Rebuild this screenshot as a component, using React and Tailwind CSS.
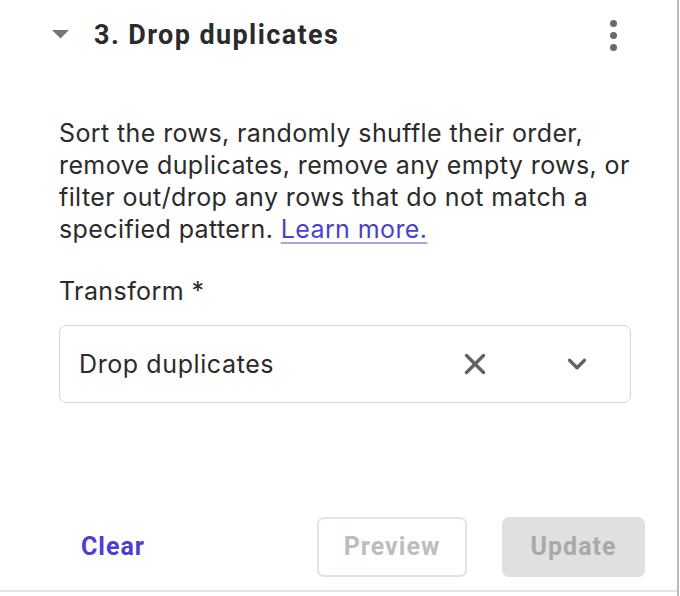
import { X, ChevronDown } from "lucide-react";

export default function App() {
  const bodyFont = { fontFamily: "Inter, 'Open Sans', sans-serif" };
  const headFont = { fontFamily: "Roboto, 'Liberation Sans', sans-serif" };

  return (
    <div className="w-[680px] h-[596px] bg-white">
      <div className="w-[679px] h-full border-r-2 border-[#b9b9b9]">
        <div className="h-[592px] border-b-2 border-[#e3e3e3] flex flex-col">
          {/* header */}
          <div className="flex items-center h-[70px] pl-[52px] pr-[60px]" style={headFont}>
            <svg width="17" height="9" viewBox="0 0 17 9" className="mt-[-2px]">
              <path d="M0 0 H17 L8.5 8.5 Z" fill="#757575" />
            </svg>
            <span className="ml-[25px] text-[27px] font-bold text-[#2b2b2b] tracking-[1.4px]">3. Drop duplicates</span>
            <div className="ml-auto flex flex-col gap-[5px]">
              <span className="w-[7px] h-[7px] rounded-full bg-[#6a6a6a]" />
              <span className="w-[7px] h-[7px] rounded-full bg-[#6a6a6a]" />
              <span className="w-[7px] h-[7px] rounded-full bg-[#6a6a6a]" />
            </div>
          </div>

          {/* body */}
          <div className="pl-[59px] pr-[40px] pt-[47px] text-[25px] tracking-[0.4px] leading-[32px] text-[#2b2b2b]" style={bodyFont}>
            <p>
              Sort the rows, randomly shuffle their order, remove duplicates, remove any empty rows, or filter out/drop any rows that do not match a specified pattern.{" "}
              <a href="#" className="text-[#4b3fd1] underline decoration-[#a9a3ea] underline-offset-4">Learn more.</a>
            </p>
            <div className="mt-[30px]">Transform *</div>
            <div className="mt-[18px] w-[572px] h-[78px] border border-[#d6d6d6] rounded-[7px] flex items-center pl-[19px] pr-[38px]">
              <span className="tracking-[0.6px]">Drop duplicates</span>
              <X className="ml-auto" size={34} strokeWidth={2.4} color="#616161" />
              <ChevronDown className="ml-[70px]" size={30} strokeWidth={2.6} color="#616161" />
            </div>
          </div>

          {/* footer */}
          <div className="mt-auto mb-[13px] flex items-center pl-[81px] pr-[32px] text-[25px] tracking-[1px] font-bold" style={headFont}>
            <button className="text-[#4b3fd1]">Clear</button>
            <button className="ml-auto w-[150px] h-[60px] border-2 border-[#e3e3e3] rounded-[7px] text-[#bdbdbd]">Preview</button>
            <button className="ml-[35px] w-[143px] h-[60px] rounded-[7px] bg-[#e0e0e0] text-[#a9a9a9]">Update</button>
          </div>
        </div>
      </div>
    </div>
  );
}
